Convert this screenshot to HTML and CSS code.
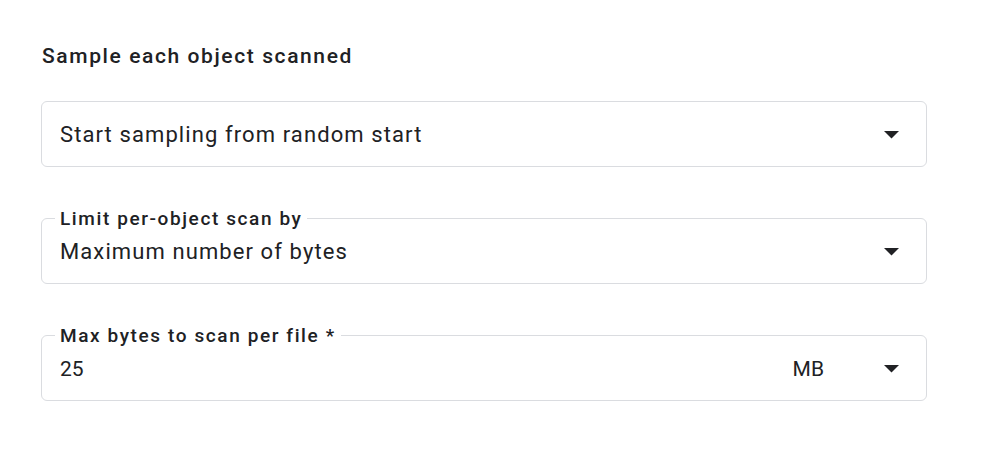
FILE: index.html
```html
<!DOCTYPE html>
<html lang="en">
<head>
  <meta charset="UTF-8" />
  <meta name="viewport" content="width=device-width, initial-scale=1.0"/>
  <title>Sampling options</title>
  <link rel="stylesheet" href="styles.css">
</head>
<body>

  <div class="panel">
    <h3 class="panel-title">Sample each object scanned</h3>

    <div class="field">
      <span class="field-value">Start sampling from random start</span>
      <svg class="field-arrow" viewBox="0 0 10 5" width="15" height="7.5"><path d="M0 0 L5 5 L10 0 Z"/></svg>
    </div>

    <div class="field">
      <span class="field-label">Limit per-object scan by</span>
      <span class="field-value">Maximum number of bytes</span>
      <svg class="field-arrow" viewBox="0 0 10 5" width="15" height="7.5"><path d="M0 0 L5 5 L10 0 Z"/></svg>
    </div>

    <div class="field">
      <span class="field-label">Max bytes to scan per file *</span>
      <span class="field-value field-number">25</span>
      <span class="field-unit">MB</span>
      <svg class="field-arrow" viewBox="0 0 10 5" width="15" height="7.5"><path d="M0 0 L5 5 L10 0 Z"/></svg>
    </div>
  </div>

</body>
</html>
```

FILE: styles.css
```css
body {
  margin: 0;
  padding: 0;
  background: #fff;
  font-family: Roboto, "Liberation Sans", sans-serif;
  color: #202124;
}

.panel {
  width: 886px;
  margin-left: 41px;
  padding-top: 44px;
}

.panel-title {
  margin: 0 0 33px 1px;
  font-size: 21px;
  line-height: 24px;
  font-weight: 500;
  letter-spacing: 1.6px;
}

.field {
  position: relative;
  display: flex;
  align-items: center;
  box-sizing: border-box;
  height: 66px;
  padding: 0 27px 0 18px;
  border: 1px solid #dadce0;
  border-radius: 6px;
  margin-bottom: 51px;
}

.field-label {
  position: absolute;
  top: 0;
  left: 13px;
  transform: translateY(-50%);
  padding: 0 5px 0 5px;
  background: #fff;
  font-size: 19px;
  line-height: 20px;
  font-weight: 500;
  letter-spacing: 1.6px;
}

.field-value {
  flex: 1;
  font-size: 22px;
  line-height: 26px;
  padding-top: 2px;
  letter-spacing: 1.1px;
}

.field-number {
  font-size: 21px;
  letter-spacing: 0;
}

.field-unit {
  font-size: 21px;
  line-height: 26px;
  padding-top: 2px;
  margin-right: 60px;
}

.field-arrow {
  fill: #202124;
  margin-top: 2px;
}
```
